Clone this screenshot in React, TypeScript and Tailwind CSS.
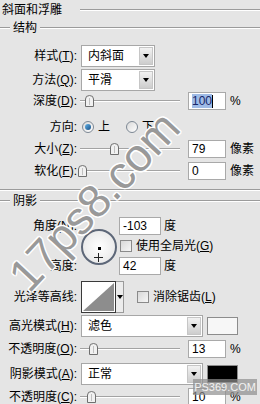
import type { CSSProperties, ReactNode } from 'react';

function Rule() {
  return <div className="flex-1 h-[2px] border-t border-t-[#9b9b9b] border-b border-b-white" />;
}

function Label({ children }: { children: ReactNode }) {
  return <span className="w-[77px] shrink-0 text-right whitespace-nowrap">{children}</span>;
}

function Tri() {
  return <div className="w-0 h-0 border-x-[3px] border-x-transparent border-t-[4px] border-t-black" />;
}

function Select({ value, className }: { value: string; className: string }) {
  return (
    <div className={`${className} h-[22px] ml-[4px] flex items-center bg-white border border-[#a7a7a7]`}>
      <span className="flex-1 pl-[6px]">{value}</span>
      <div className="w-[14px] h-[18px] mr-[1px] flex items-center justify-center bg-gradient-to-b from-[#f2f2f2] to-[#cdcdcd] border border-[#c6c6c6]">
        <Tri />
      </div>
    </div>
  );
}

function Thumb({ style }: { style: CSSProperties }) {
  return (
    <svg className="absolute top-[3px]" style={style} width="9" height="12" viewBox="0 0 9 12">
      <path d="M0.5 11.5 V4 Q0.5 0.5 4.5 0.5 Q8.5 0.5 8.5 4 V11.5 Z" fill="#f1f1f1" stroke="#6f6f6f" />
      <path d="M4.5 3 V10" stroke="#c0c0c0" />
    </svg>
  );
}

function Slider({ at }: { at: number }) {
  return (
    <div className="relative ml-[3px] w-[100px] h-[18px] flex items-center">
      <div className="w-full h-[2px] border-t border-t-[#a3a3a3] border-b border-b-white" />
      <Thumb style={{ left: at - 88 }} />
    </div>
  );
}

function Field({ value, className, selected }: { value: string; className: string; selected?: boolean }) {
  return (
    <div className={`${className} h-[18px] flex items-center bg-white border border-[#a9a9a9] pl-[3px]`}>
      {selected ? <span className="bg-[#9fbbe6] text-[#16276a] leading-[14px]">{value}</span> : value}
      {selected && <span className="w-px h-[13px] bg-black" />}
    </div>
  );
}

function SliderRow({ label, at, value, unit, className, selected }: { label: ReactNode; at: number; value: string; unit: string; className: string; selected?: boolean }) {
  return (
    <div className={`${className} h-[18px] flex items-center`}>
      <Label>{label}</Label>
      <Slider at={at} />
      <Field value={value} className="ml-[8px] w-[38px]" selected={selected} />
      <span className="ml-[4px]">{unit}</span>
    </div>
  );
}

function Radio({ on }: { on?: boolean }) {
  return (
    <div className="w-[12px] h-[12px] rounded-full border border-[#7d8894] bg-gradient-to-br from-[#d9d9d9] to-white flex items-center justify-center">
      {on && <div className="w-[6px] h-[6px] rounded-full bg-gradient-to-br from-[#62b3e8] to-[#174f86]" />}
    </div>
  );
}

function Check() {
  return <div className="w-[12px] h-[12px] border border-[#8a8a8a] bg-gradient-to-br from-[#d8d8d8] to-[#f6f6f6]" />;
}

function Swatch({ className }: { className: string }) {
  return <div className={`${className} ml-[4px] w-[31px] h-[18px] border border-[#8c8c8c]`} />;
}

export default function App() {
  return (
    <div className="relative w-[260px] h-[404px] overflow-hidden bg-[#e5e5e5] text-[12px] text-black font-['Liberation_Sans','Noto_Sans_CJK_SC',sans-serif]">
      <div className="h-[19px] flex items-center pl-[2px]">
        <span>斜面和浮雕</span>
        <div className="ml-[18px] flex-1 flex"><Rule /></div>
      </div>

      <div className="h-[18px] flex items-center">
        <div className="w-[10px] flex"><Rule /></div>
        <span className="px-[3px]">结构</span>
        <Rule />
      </div>

      <div className="mt-[8px] h-[22px] flex items-center">
        <Label>样式(<u>T</u>):</Label>
        <Select value="内斜面" className="w-[74px]" />
      </div>
      <div className="mt-[2px] h-[22px] flex items-center">
        <Label>方法(<u>Q</u>):</Label>
        <Select value="平滑" className="w-[74px]" />
      </div>
      <SliderRow className="mt-[1px]" label={<>深度(<u>D</u>):</>} at={93} value="100" unit="%" selected />

      <div className="mt-[8px] h-[18px] flex items-center">
        <Label>方向:</Label>
        <div className="ml-[5px]"><Radio on /></div>
        <span className="ml-[4px]">上</span>
        <div className="ml-[16px]"><Radio /></div>
        <span className="ml-[4px]">下</span>
      </div>
      <SliderRow className="mt-[4px]" label={<>大小(<u>Z</u>):</>} at={118} value="79" unit="像素" />
      <SliderRow className="mt-[4px]" label={<>软化(<u>F</u>):</>} at={86} value="0" unit="像素" />

      <div className="mt-[9px] h-[2px] border-t border-t-[#9b9b9b] border-b border-b-white" />

      <div className="mt-[1px] h-[18px] flex items-center">
        <div className="w-[10px] flex"><Rule /></div>
        <span className="px-[3px]">阴影</span>
        <Rule />
      </div>

      <div className="mt-[7px] grid grid-cols-[77px_36px_1fr] grid-rows-[18px_18px_18px] gap-y-[2px]">
        <span className="col-start-1 row-start-1 self-center text-right">角度(<u>N</u>):</span>
        <span className="col-start-1 row-start-3 self-center text-right">高度:</span>
        <div className="col-start-2 row-start-1 row-span-3 self-center ml-[4px] mt-[1px] w-[36px] h-[36px] rounded-full border-2 border-[#5d6778] bg-radial from-white to-[#e3e3e3] relative">
          <div className="absolute left-[15px] top-[16px] w-[3px] h-[3px] bg-black" />
          <svg className="absolute left-[11px] top-[22px]" width="9" height="9" viewBox="0 0 9 9">
            <path d="M4.5 0 V9 M0 4.5 H9" stroke="#222" strokeWidth="1" />
          </svg>
        </div>
        <div className="col-start-3 row-start-1 flex items-center ml-[6px]">
          <Field value="-103" className="w-[42px]" />
          <span className="ml-[3px]">度</span>
        </div>
        <div className="col-start-3 row-start-2 flex items-center ml-[7px]">
          <Check />
          <span className="ml-[4px]">使用全局光(<u>G</u>)</span>
        </div>
        <div className="col-start-3 row-start-3 flex items-center ml-[6px]">
          <Field value="42" className="w-[42px]" />
          <span className="ml-[3px]">度</span>
        </div>
      </div>

      <div className="mt-[6px] h-[32px] flex items-center">
        <Label>光泽等高线:</Label>
        <div className="ml-[4px] flex">
          <svg width="35" height="32" viewBox="0 0 35 32">
            <rect x="0.5" y="0.5" width="34" height="31" fill="#fff" stroke="#3a3a3a" />
            <path d="M2 30 L33 2 V30 Z" fill="#8d8d8d" />
          </svg>
          <div className="w-[8px] h-[32px] flex items-center justify-center border border-l-0 border-[#9a9a9a] bg-[#ececec]">
            <Tri />
          </div>
        </div>
        <div className="ml-[13px]"><Check /></div>
        <span className="ml-[4px]">消除锯齿(<u>L</u>)</span>
      </div>

      <div className="mt-[2px] h-[22px] flex items-center">
        <Label>高光模式(<u>H</u>):</Label>
        <Select value="滤色" className="w-[122px]" />
        <Swatch className="bg-[#f7f7f7]" />
      </div>
      <SliderRow className="mt-[3px]" label={<>不透明度(<u>O</u>):</>} at={97} value="13" unit="%" />
      <div className="mt-[5px] h-[22px] flex items-center">
        <Label>阴影模式(<u>A</u>):</Label>
        <Select value="正常" className="w-[122px]" />
        <Swatch className="bg-black" />
      </div>
      <SliderRow className="mt-[3px]" label={<>不透明度(<u>C</u>):</>} at={95} value="10" unit="%" />

      <div className="absolute left-[-26px] top-[176px] w-[240px] h-[50px] leading-[50px] text-center text-[46px] text-[#999999] -rotate-[47deg] font-['Liberation_Sans',sans-serif] [text-shadow:1.5px_0_0_#fff,-1.5px_0_0_#fff,0_1.5px_0_#fff,0_-1.5px_0_#fff,1px_1px_0_#fff,-1px_-1px_0_#fff,1px_-1px_0_#fff,-1px_1px_0_#fff]">
        17ps8.com
      </div>

      <div className="absolute left-[193px] top-[379px] w-[64px] h-[16px] bg-[#8e8e8e]/70 flex items-center justify-center text-[11px] text-[#f2f2f2] font-['Liberation_Sans',sans-serif]">
        PS369.COM
      </div>
    </div>
  );
}
